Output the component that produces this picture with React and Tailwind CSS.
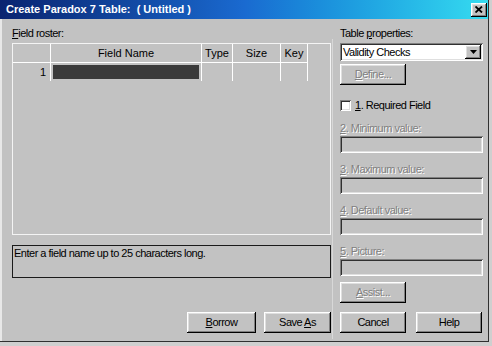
export default function App() {
  const etched = "text-[#808080] [text-shadow:1px_1px_0_#ffffff]";
  const raised =
    "shadow-[inset_-1px_-1px_0_#000000,inset_1px_1px_0_#ffffff,inset_-2px_-2px_0_#808080,inset_2px_2px_0_#dfdfdf]";
  const sunken =
    "shadow-[inset_1px_1px_0_#808080,inset_-1px_-1px_0_#ffffff,inset_2px_2px_0_#303030,inset_-2px_-2px_0_#dfdfdf]";

  const Label = ({ n, text }) => (
    <div className={"h-[13px] leading-[13px] mt-[10px] whitespace-nowrap " + etched}>
      <span className="underline">{n}</span>
      {text}
    </div>
  );
  const Input = () => (
    <div className={"h-[17px] mt-[1px] bg-[#c2c2c2] " + sunken}></div>
  );

  return (
    <div className="w-[492px] h-[346px] bg-[#cfcfcf] overflow-hidden font-['Liberation_Sans',Arial,sans-serif] text-[11px] tracking-[-0.5px] text-black">
      <div className="w-[489px] h-[342px] bg-[#c2c2c2] flex flex-col border-r border-b border-[#303030] shadow-[inset_2px_0_0_#e8e8e8]">
        {/* Title bar */}
        <div className="h-[19px] shrink-0 flex items-center bg-linear-to-r from-[#0a2470] via-[#1a6ad0] to-[#36dcf0]">
          <span className="pl-[6px] text-white font-bold text-[11px] tracking-normal whitespace-pre leading-none">
            Create Paradox 7 Table:  ( Untitled )
          </span>
          <div
            className={
              "ml-auto mr-[1px] w-[16px] h-[14px] bg-[#c2c2c2] flex items-center justify-center " +
              raised
            }
          >
            <svg width="8" height="7" viewBox="0 0 8 7">
              <path d="M0.5 0.5 L7 6.5 M7 0.5 L0.5 6.5" stroke="#000" strokeWidth="1.8" />
            </svg>
          </div>
        </div>

        <div className="flex-1 flex">
          {/* Left column */}
          <div className="ml-[12px] w-[319px] flex flex-col pb-[8px]">
            <div className="h-[13px] leading-[13px] mt-[8px] whitespace-nowrap">
              <span className="underline">F</span>ield roster:
            </div>
            <div className="mt-[3px] h-[192px] border border-[#f4f4f4] flex flex-col">
              <div className="flex h-[19px] tracking-normal">
                <div className="w-[38px] border-r border-b border-white"></div>
                <div className="w-[151px] border-r border-b border-white flex items-center justify-center">
                  Field Name
                </div>
                <div className="w-[31px] border-r border-b border-white flex items-center justify-center">
                  Type
                </div>
                <div className="w-[48px] border-r border-b border-white flex items-center justify-center">
                  Size
                </div>
                <div className="w-[27px] border-r border-b border-white flex items-center justify-center">
                  Key
                </div>
              </div>
              <div className="flex h-[18px]">
                <div className="w-[38px] border-r border-white flex items-center justify-end pr-[4px] tracking-normal">
                  1
                </div>
                <div className="w-[151px] border-r border-white px-[2px] pt-[2px] pb-[2px]">
                  <div className="h-full bg-[#3a3a3a]"></div>
                </div>
                <div className="w-[31px] border-r border-white"></div>
                <div className="w-[48px] border-r border-white"></div>
                <div className="w-[27px] border-r border-white"></div>
              </div>
            </div>
            <div className="mt-[10px] h-[33px] border border-[#1a1a1a] pl-[1px] pt-[1px]">
              <div className="h-[13px] leading-[13px] whitespace-nowrap">
                Enter a field name up to 25 characters long.
              </div>
            </div>
            <div className="mt-auto flex justify-end gap-[8px]">
              <div className={"w-[69px] h-[21px] flex items-center justify-center " + raised}>
                <span>
                  <span className="underline">B</span>orrow
                </span>
              </div>
              <div className={"w-[67px] h-[21px] flex items-center justify-center " + raised}>
                <span>
                  Save <span className="underline">A</span>s
                </span>
              </div>
            </div>
          </div>

          {/* separator */}
          <div className="ml-[1px] mt-[20px] mb-[2px] w-[1px] bg-[#d8d8d8]"></div>

          {/* Right column */}
          <div className="ml-[7px] w-[143px] flex flex-col pb-[8px]">
            <div className="h-[13px] leading-[13px] mt-[8px] whitespace-nowrap">
              Table <span className="underline">p</span>roperties:
            </div>
            <div className={"mt-[3px] h-[18px] bg-white flex items-center pl-[3px] pr-[2px] " + sunken}>
              <span className="whitespace-nowrap">Validity Checks</span>
              <div className={"ml-auto w-[16px] h-[14px] bg-[#c2c2c2] flex items-center justify-center " + raised}>
                <svg width="7" height="4" viewBox="0 0 7 4">
                  <path d="M0 0 H7 L3.5 4 Z" fill="#000" />
                </svg>
              </div>
            </div>
            <div className={"mt-[3px] w-[66px] h-[21px] flex items-center justify-center " + raised}>
              <span className={etched}>
                <span className="underline">D</span>efine...
              </span>
            </div>
            <div className="mt-[14px] h-[13px] flex items-center">
              <div className={"w-[11px] h-[11px] bg-white " + sunken}></div>
              <span className="ml-[4px] whitespace-nowrap">
                <span className="underline">1</span>. Required Field
              </span>
            </div>
            <Label n="2" text=". Minimum value:" />
            <Input />
            <Label n="3" text=". Maximum value:" />
            <Input />
            <Label n="4" text=". Default value:" />
            <Input />
            <Label n="5" text=". Picture:" />
            <Input />
            <div className={"mt-[6px] w-[66px] h-[21px] flex items-center justify-center " + raised}>
              <span className={etched}>
                <span className="underline">A</span>ssist...
              </span>
            </div>
            <div className="mt-auto flex gap-[10px]">
              <div className={"w-[66px] h-[21px] flex items-center justify-center " + raised}>
                Cancel
              </div>
              <div className={"w-[66px] h-[21px] flex items-center justify-center " + raised}>
                Help
              </div>
            </div>
          </div>
        </div>
      </div>
    </div>
  );
}
